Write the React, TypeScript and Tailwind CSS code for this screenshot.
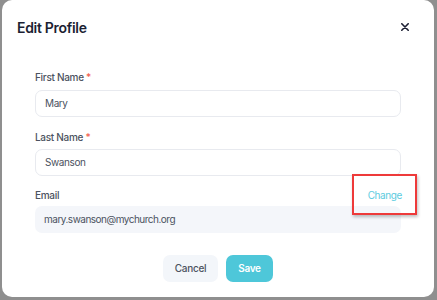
import React from "react";

export default function App() {
  return (
    <div className="w-[437px] h-[300px] bg-[#8f8f8f] pl-[2px] pr-[3px] pb-[3px] overflow-hidden" style={{ fontFamily: "Inter, 'Noto Sans', sans-serif" }}>
      <div className="w-full h-full bg-white rounded-[10px] flex flex-col">
        <div className="flex items-center justify-between pl-[15px] pr-[25px] h-[54px]">
          <h1 className="text-[14px] font-semibold text-[#1c1f33] tracking-[-0.3px]">Edit Profile</h1>
          <svg width="8" height="8" viewBox="0 0 10 10" className="text-[#1c1f33]">
            <path d="M1 1L9 9M9 1L1 9" stroke="currentColor" strokeWidth="2" strokeLinecap="round" />
          </svg>
        </div>
        <div className="px-[33px] pt-[16px] flex flex-col">
          <label className="text-[10px] font-medium text-[#4b5260] h-[14px] leading-[14px] tracking-[-0.3px]">
            First Name <span className="text-[#f2604d]">*</span>
          </label>
          <div className="mt-[6px] h-[27px] border border-[#e8eaef] rounded-[7px] flex items-center px-[9px] text-[10px] text-[#4b5260] tracking-[-0.4px]">Mary</div>
          <label className="mt-[13px] text-[10px] font-medium text-[#4b5260] h-[14px] leading-[14px] tracking-[-0.3px]">
            Last Name <span className="text-[#f2604d]">*</span>
          </label>
          <div className="mt-[5px] h-[27px] border border-[#e8eaef] rounded-[7px] flex items-center px-[9px] text-[10px] text-[#4b5260] tracking-[-0.4px]">Swanson</div>
          <div className="mt-[12px] flex items-center justify-between h-[14px]">
            <span className="text-[10px] font-medium text-[#4b5260] leading-[14px] tracking-[-0.3px]">Email</span>
            <span className="relative mr-[-1px] text-[10px] text-[#5ccbe0] leading-[14px] tracking-[-0.4px]">
              Change
              <span className="absolute left-[-16px] right-[-15px] top-[-14px] bottom-[-13px] border-2 border-[#ee3a3a] shadow-[1px_2px_3px_rgba(0,0,0,0.25)]"></span>
            </span>
          </div>
          <div className="mt-[4px] h-[27px] bg-[#f4f6fa] rounded-[7px] flex items-center px-[9px] text-[10px] text-[#4b5260] tracking-[-0.5px]">mary.swanson@mychurch.org</div>
          <div className="mt-[22px] flex justify-center gap-[8px]">
            <button className="h-[27px] w-[55px] rounded-[7px] bg-[#f3f6fa] text-[10px] font-medium text-[#4b5260] tracking-[-0.3px]">Cancel</button>
            <button className="h-[27px] w-[47px] rounded-[7px] bg-[#4ec7d9] text-[10px] font-semibold text-white tracking-[-0.3px]">Save</button>
          </div>
        </div>
      </div>
    </div>
  );
}
